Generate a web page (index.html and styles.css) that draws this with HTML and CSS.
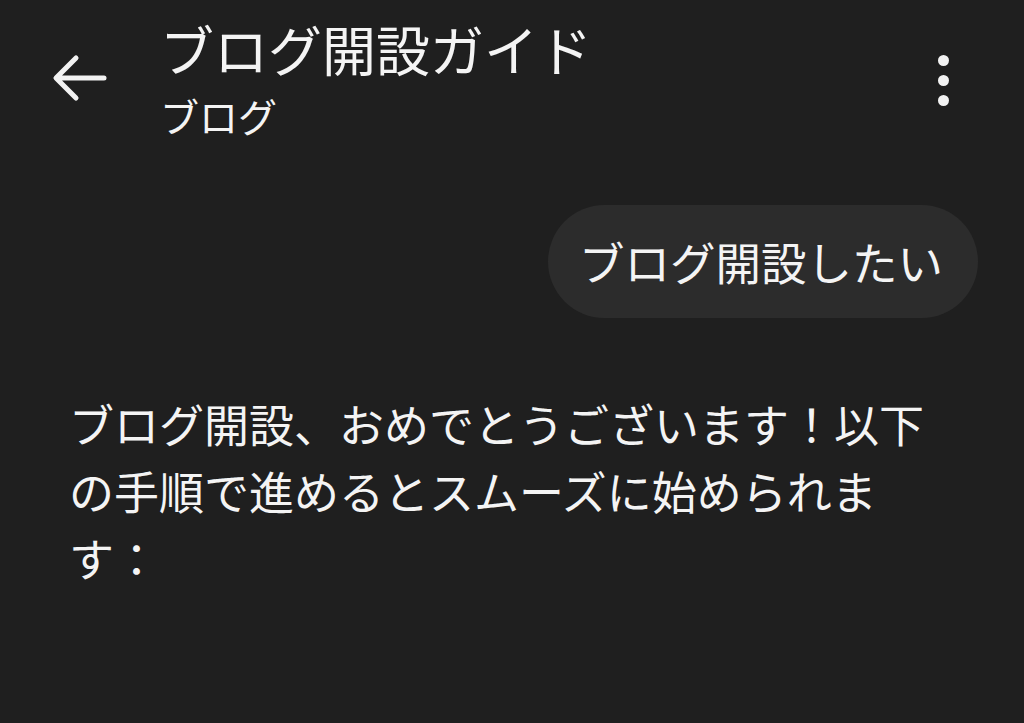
FILE: index.html
```html
<!DOCTYPE html>
<html lang="ja">
<head>
    <meta charset="UTF-8">
    <meta name="viewport" content="width=device-width, initial-scale=1.0">
    <title>ブログ開設ガイド</title>
    <link rel="stylesheet" href="styles.css">
</head>
<body>
    <header class="top-bar">
        <button class="icon-btn back" aria-label="戻る">
            <svg width="64" height="64" viewBox="0 0 24 24">
                <path d="M21 12H3.5M10.5 4.5L3 12L10.5 19.5" fill="none" stroke="#f2f2f2" stroke-width="1.9" stroke-linecap="round" stroke-linejoin="round"/>
            </svg>
        </button>
        <div class="titles">
            <h1>ブログ開設ガイド</h1>
            <p class="subtitle">ブログ</p>
        </div>
        <button class="icon-btn more" aria-label="その他">
            <span class="dot"></span>
            <span class="dot"></span>
            <span class="dot"></span>
        </button>
    </header>

    <main class="chat">
        <div class="row-user">
            <div class="bubble">ブログ開設したい</div>
        </div>
        <p class="reply">ブログ開設、おめでとうございます！以下の手順で進めるとスムーズに始められます：</p>
    </main>
</body>
</html>
```

FILE: styles.css
```css
body {
    margin: 0;
    background-color: #1f1f1f;
    color: #f4f4f4;
    font-family: "Noto Sans CJK JP", "Noto Sans", sans-serif;
}
.top-bar {
    display: flex;
    align-items: flex-start;
    padding: 16px 75px 0 48px;
}
.icon-btn {
    background: none;
    border: none;
    padding: 0;
    cursor: pointer;
}
.back {
    width: 64px;
    height: 64px;
    margin-top: 30px;
}
.titles {
    flex: 1;
    margin-left: 48px;
}
h1 {
    margin: 0;
    font-size: 54px;
    font-weight: 400;
    line-height: 66px;
}
.subtitle {
    margin: 9px 0 0;
    font-size: 39px;
    line-height: 48px;
}
.more {
    display: flex;
    flex-direction: column;
    gap: 9px;
    margin-top: 39px;
}
.dot {
    width: 11px;
    height: 11px;
    border-radius: 50%;
    background: #f2f2f2;
}
.chat {
    padding: 0 46px 0 69px;
}
.row-user {
    display: flex;
    justify-content: flex-end;
    margin-top: 66px;
}
.bubble {
    background: #2c2c2c;
    border-radius: 57px;
    padding: 0 35px 0 31px;
    height: 113px;
    line-height: 113px;
    font-size: 45.5px;
}
.reply {
    margin: 72px 0 0;
    max-width: 880px;
    font-size: 45px;
    line-height: 67px;
}
```
